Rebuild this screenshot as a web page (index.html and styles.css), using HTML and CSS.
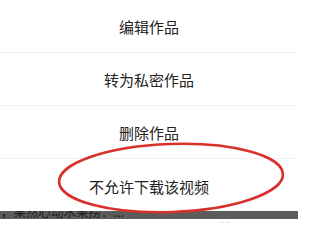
FILE: index.html
```html
<!DOCTYPE html>
<html lang="zh-CN">
<head>
<meta charset="utf-8">
<link rel="stylesheet" href="styles.css">
</head>
<body>
<div class="page">
  <div class="sheet">
    <div class="item">编辑作品</div>
    <div class="item">转为私密作品</div>
    <div class="item">删除作品</div>
    <div class="item last">不允许下载该视频</div>
  </div>
  <div class="bar"><div class="bar-text">，果然心动水果捞：...</div></div>
  <div class="footer">
    <svg class="foot-icon" width="16" height="8" viewBox="0 0 16 8"><path d="M2 8 A3 3 0 0 1 8 6 A3 3 0 0 1 14 8" fill="none" stroke="#d4d4d4" stroke-width="1.2"/></svg>
  </div>
  <svg class="annot" width="298" height="223" viewBox="0 0 298 223">
    <ellipse cx="171" cy="178" rx="112" ry="34" transform="rotate(-2 171 178)" fill="none" stroke="#d8302a" stroke-width="2.6"/>
  </svg>
</div>
</body>
</html>
```
FILE: styles.css
```css
html, body {
  margin: 0;
  padding: 0;
  background: #ffffff;
}
.page {
  position: relative;
  width: 298px;
  height: 223px;
  overflow: hidden;
  font-family: "Noto Sans CJK SC", "Noto Sans", sans-serif;
}
.sheet {
  display: flex;
  flex-direction: column;
  background: #ffffff;
  position: relative;
  z-index: 1;
}
.item {
  height: 51px;
  display: flex;
  align-items: center;
  justify-content: center;
  font-size: 15px;
  color: #222222;
  border-bottom: 1px solid #f1f1f1;
  padding-top: 1px;
  box-sizing: content-box;
}
.item.last {
  border-bottom: none;
  height: 50px;
  padding-top: 2px;
}
.bar {
  height: 8px;
  background: #5c5c5c;
  overflow: hidden;
}
.bar-text {
  margin-top: -6px;
  padding-left: 1px;
  font-size: 12.5px;
  line-height: 14px;
  color: #1a1a1a;
  white-space: nowrap;
}
.footer {
  height: 8px;
  background: #ffffff;
  display: flex;
  padding-left: 217px;
  align-items: flex-end;
}
.foot-icon {
  display: block;
}
.annot {
  position: absolute;
  left: 0;
  top: 0;
  z-index: 2;
  pointer-events: none;
}
```
